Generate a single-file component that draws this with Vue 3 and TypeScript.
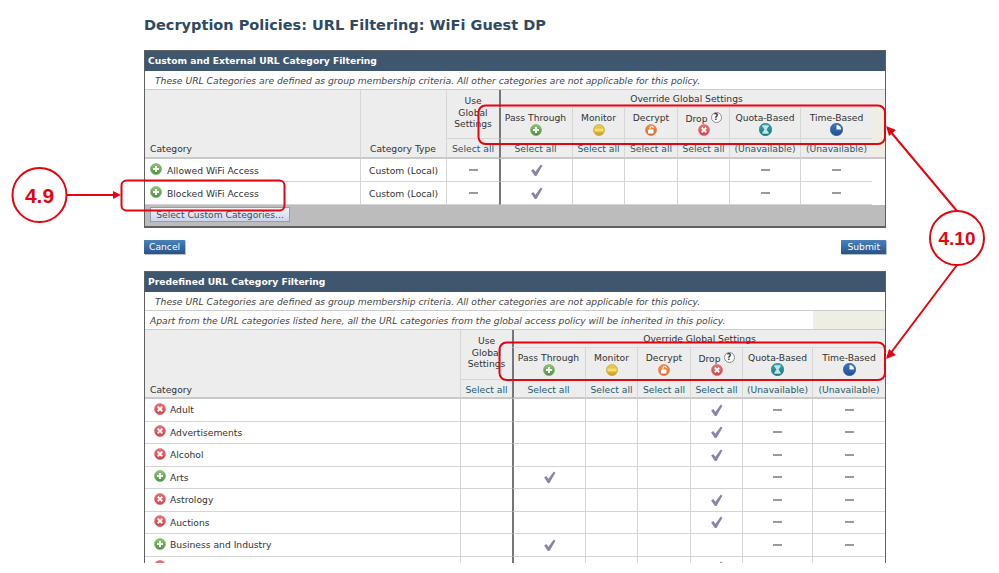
<script setup lang="ts">
type Mark = '' | 'dash' | 'check'
interface Row { icon: string; name: string; type?: string; cells: Mark[] }
interface Panel {
  id: string
  title: string
  notes: string[]
  hasType: boolean
  rows: Row[]
  footer: boolean
}

const actions = [
  { label: 'Pass Through', icon: 'allow', help: false, link: 'Select all' },
  { label: 'Monitor', icon: 'monitor', help: false, link: 'Select all' },
  { label: 'Decrypt', icon: 'decrypt', help: false, link: 'Select all' },
  { label: 'Drop', icon: 'drop', help: true, link: 'Select all' },
  { label: 'Quota-Based', icon: 'quota', help: false, link: '(Unavailable)' },
  { label: 'Time-Based', icon: 'time', help: false, link: '(Unavailable)' },
]

const note = 'These URL Categories are defined as group membership criteria. All other categories are not applicable for this policy.'
const passRow: Mark[] = ['', 'check', '', '', '', 'dash', 'dash']
const dropRow: Mark[] = ['', '', '', '', 'check', 'dash', 'dash']
const customRow: Mark[] = ['dash', 'check', '', '', '', 'dash', 'dash']

const panels: Panel[] = [
  {
    id: 'custom',
    title: 'Custom and External URL Category Filtering',
    notes: [note],
    hasType: true,
    footer: true,
    rows: [
      { icon: 'allow', name: 'Allowed WiFi Access', type: 'Custom (Local)', cells: customRow },
      { icon: 'allow', name: 'Blocked WiFi Access', type: 'Custom (Local)', cells: customRow },
    ],
  },
  {
    id: 'predefined',
    title: 'Predefined URL Category Filtering',
    notes: [note, 'Apart from the URL categories listed here, all the URL categories from the global access policy will be inherited in this policy.'],
    hasType: false,
    footer: false,
    rows: [
      { icon: 'drop', name: 'Adult', cells: dropRow },
      { icon: 'drop', name: 'Advertisements', cells: dropRow },
      { icon: 'drop', name: 'Alcohol', cells: dropRow },
      { icon: 'allow', name: 'Arts', cells: passRow },
      { icon: 'drop', name: 'Astrology', cells: dropRow },
      { icon: 'drop', name: 'Auctions', cells: dropRow },
      { icon: 'allow', name: 'Business and Industry', cells: passRow },
      { icon: 'drop', name: 'Chat and Instant Messaging', cells: dropRow },
    ],
  },
]
</script>

<template>
  <div class="page">
    <svg class="defs" width="0" height="0" aria-hidden="true">
      <defs>
        <linearGradient id="g-green" x1="0" y1="0" x2="0" y2="1"><stop offset="0" stop-color="#93c678" /><stop offset="1" stop-color="#4c9440" /></linearGradient>
        <linearGradient id="g-yellow" x1="0" y1="0" x2="0" y2="1"><stop offset="0" stop-color="#f0cf52" /><stop offset="1" stop-color="#d2a31f" /></linearGradient>
        <linearGradient id="g-orange" x1="0" y1="0" x2="0" y2="1"><stop offset="0" stop-color="#f4924e" /><stop offset="1" stop-color="#e2682a" /></linearGradient>
        <linearGradient id="g-red" x1="0" y1="0" x2="0" y2="1"><stop offset="0" stop-color="#ea7377" /><stop offset="1" stop-color="#d3444b" /></linearGradient>
        <linearGradient id="g-teal" x1="0" y1="0" x2="0" y2="1"><stop offset="0" stop-color="#39a8ac" /><stop offset="1" stop-color="#14777f" /></linearGradient>
        <linearGradient id="g-blue" x1="0" y1="0" x2="0" y2="1"><stop offset="0" stop-color="#3d78c0" /><stop offset="1" stop-color="#1f4f97" /></linearGradient>
      </defs>
      <symbol id="i-allow" viewBox="0 0 24 24">
        <circle cx="12" cy="12" r="11" fill="url(#g-green)" stroke="#5a9a48" />
        <path d="M12 6v12M6 12h12" stroke="#fff" stroke-width="4" />
      </symbol>
      <symbol id="i-monitor" viewBox="0 0 24 24">
        <circle cx="12" cy="12" r="11" fill="url(#g-yellow)" stroke="#a98e2a" />
        <rect x="3" y="9" width="18" height="6" fill="#f6df72" />
      </symbol>
      <symbol id="i-decrypt" viewBox="0 0 24 24">
        <circle cx="12" cy="12" r="11" fill="url(#g-orange)" stroke="#d9652a" />
        <rect x="6" y="11" width="11" height="8" rx="1" fill="#fff" />
        <path d="M10 11V8a3.4 3.4 0 0 1 6.8 0" fill="none" stroke="#fff" stroke-width="2" />
      </symbol>
      <symbol id="i-drop" viewBox="0 0 24 24">
        <circle cx="12" cy="12" r="11" fill="url(#g-red)" stroke="#cf5257" />
        <path d="M7.500 7.500l9 9M16.500 7.500l-9 9" stroke="#fff" stroke-width="3.600" />
      </symbol>
      <symbol id="i-quota" viewBox="0 0 24 24">
        <circle cx="12" cy="12" r="11.500" fill="url(#g-teal)" stroke="#176a72" />
        <path d="M6 4h12v2L14 12l4 6v2H6v-2l4-6-4-6z" fill="#bfe6e6" />
      </symbol>
      <symbol id="i-time" viewBox="0 0 24 24">
        <circle cx="12" cy="12" r="11.500" fill="url(#g-blue)" stroke="#1f4f97" />
        <path d="M12 12V3.500A8.500 8.500 0 0 1 20.500 12z" fill="#fff" />
      </symbol>
      <symbol id="i-check" viewBox="0 0 24 24">
        <path d="M2 13l4-3 4 5L20 2l3 2-11 19h-3z" fill="#8687a8" />
      </symbol>
    </svg>

    <h1 class="title">Decryption Policies: URL Filtering: WiFi Guest DP</h1>

    <template v-for="panel in panels" :key="panel.id">
      <section class="panel" :class="panel.id">
        <h2 class="bar">{{ panel.title }}</h2>
        <div v-for="(text, n) in panel.notes" :key="n" class="note" :class="'note' + n">
          <p>{{ text }}</p>
        </div>
        <div class="grid">
          <div class="h cat">Category</div>
          <div v-if="panel.hasType" class="h ctype">Category Type</div>
          <div class="h use">Use<br />Global<br />Settings</div>
          <div class="h over">Override Global Settings</div>
          <div v-if="panel.hasType" class="h tail-top"></div>

          <div v-for="(a, i) in actions" :key="a.label" class="h act" :class="{ first: i === 0 }">
            <span class="act-label">{{ a.label }}<span v-if="a.help" class="help">?</span></span>
            <svg class="ic" :class="a.icon"><use :href="'#i-' + a.icon" /></svg>
          </div>
          <div v-if="panel.hasType" class="h tail-mid"></div>

          <div class="h sel use-sel"><a>Select all</a></div>
          <div v-for="(a, i) in actions" :key="a.label + 's'" class="h sel" :class="{ first: i === 0, off: a.link !== 'Select all' }">
            <a v-if="a.link === 'Select all'">{{ a.link }}</a>
            <template v-else>(<a>Unavailable</a>)</template>
          </div>
          <div v-if="panel.hasType" class="h sel tail-sel"></div>

          <template v-for="row in panel.rows" :key="row.name">
            <div class="c name"><svg class="ic"><use :href="'#i-' + row.icon" /></svg>{{ row.name }}</div>
            <div v-if="panel.hasType" class="c tcell">{{ row.type }}</div>
            <div v-for="(m, i) in row.cells" :key="i" class="c mark" :class="{ first: i === 1 }">
              <svg v-if="m === 'check'" class="chk"><use href="#i-check" /></svg>
              <span v-else-if="m === 'dash'" class="dash"></span>
            </div>
            <div v-if="panel.hasType" class="tail-row"></div>
          </template>
        </div>
        <div v-if="panel.footer" class="foot"><button class="pick" type="button">Select Custom Categories...</button></div>
      </section>
      <div v-if="panel.footer" class="actions">
        <button class="blue" type="button">Cancel</button>
        <button class="blue" type="button">Submit</button>
      </div>
    </template>

    <svg class="marks" viewBox="0 0 999 573">
      <g fill="none" stroke="#e3050f" stroke-width="2">
        <rect x="121.500" y="180.500" width="163" height="30" rx="5" />
        <rect x="478.500" y="105.500" width="406.500" height="38.500" rx="7" />
        <rect x="499.500" y="342.500" width="385.500" height="37.500" rx="7" />
        <circle cx="39.500" cy="195" r="27" fill="#fff" />
        <circle cx="957" cy="238" r="27" fill="#fff" />
        <path d="M67 195H116M957 211L890 131M957 265L890 354" />
      </g>
      <g fill="#e3050f">
        <path d="M121 195l-8-4v8z" />
        <path d="M886 126l3 10 7-6z" />
        <path d="M886 359l3-10 7 6z" />
      </g>
      <text x="39.500" y="203" class="mark-text">4.9</text>
      <text x="957" y="245" class="mark-text small">4.10</text>
    </svg>
  </div>
</template>

<style scoped>
.page {
  position: relative;
  width: 999px;
  height: 573px;
  overflow: hidden;
  background: #fff;
  padding-left: 144px;
  box-sizing: border-box;
  font-family: "DejaVu Sans", Verdana, sans-serif;
  font-size: 9.200px;
  color: #333;
}
.defs { position: absolute; }
.title {
  margin: 0;
  height: 50px;
  box-sizing: border-box;
  padding-top: 15px;
  font-size: 14.500px;
  line-height: 20px;
  font-weight: 700;
  color: #2f4a63;
}
.panel {
  width: 742px;
  box-sizing: border-box;
  border: solid #5f6062;
  border-width: 1px 1px 2px 1px;
  background: #fff;
}
.panel.predefined {
  height: 292px;
  overflow: hidden;
  border-bottom: 0;
}
.bar {
  margin: 0;
  height: 20px;
  padding-left: 3px;
  font-size: 9.200px;
  line-height: 20px;
  font-weight: 700;
  color: #fff;
  background: #3f566f;
}
.note {
  height: 19px;
  box-sizing: border-box;
  border-bottom: 1px solid #ccc;
  background: #fff;
}
.note p {
  margin: 0;
  padding-left: 10px;
  line-height: 19px;
  font-style: italic;
  color: #444;
}
.note1 {
  background: #eeeee4;
}
.note1 p {
  width: 668px;
  box-sizing: border-box;
  padding-left: 5px;
  background: #fff;
  height: 18px;
}
.grid {
  display: grid;
  grid-auto-rows: 22.500px;
}
.custom .grid {
  grid-template-columns: 215px 86px 53px 73px 52px 53px 52px 71px 72px 1fr;
  grid-template-rows: 17px 32px 20px 23px 23px;
}
.predefined .grid {
  grid-template-columns: 315px 52px 73px 52px 53px 52px 70px 1fr;
  grid-template-rows: 17px 33px 19px;
}
.h {
  background: #ededed;
  box-sizing: border-box;
  text-align: center;
  border-left: 1px solid #d6d6d6;
}
.cat, .ctype {
  grid-row: 1 / 4;
  display: flex;
  align-items: flex-end;
  padding-bottom: 3px;
  border-bottom: 2px solid #c9c9c9;
  text-align: left;
}
.predefined .cat { padding-bottom: 2px; }
.cat { padding-left: 5px; border-left: 0; }
.ctype { padding-left: 9px; }
.use {
  grid-row: 1 / 3;
  padding-top: 5px;
  line-height: 11.500px;
  border-bottom: 1px solid #d6d6d6;
}
.over {
  grid-column: span 6;
  line-height: 18px;
  border-left: 2px solid #75767a;
}
.tail-top { background: #ededed; border: 0; }
.tail-mid, .tail-sel { background: #eeeee4; border: 0; }
.tail-sel { border-bottom: 2px solid #c9c9c9; }
.act {
  display: flex;
  flex-direction: column;
  align-items: center;
  padding-top: 4px;
  line-height: 11px;
  border-top: 1px solid #dcdcdc;
  border-bottom: 1px solid #d6d6d6;
}
.act.first, .sel.first { border-left: 2px solid #75767a; padding-right: 2px; }
.act-label { display: block; height: 12px; white-space: nowrap; }
.help {
  display: inline-block;
  width: 11px;
  height: 11px;
  margin-left: 3px;
  box-sizing: border-box;
  border: 1px solid #8a8a8a;
  border-radius: 50%;
  background: #fff;
  font-size: 8px;
  line-height: 9px;
  font-weight: 700;
  text-align: center;
  vertical-align: 2px;
}
.act .ic { width: 12px; height: 12px; margin-top: 0; }
.act .ic.quota, .act .ic.time { width: 13px; height: 13px; margin-top: -1px; }
.sel {
  line-height: 20px;
  white-space: nowrap;
  color: #33596a;
  border-bottom: 2px solid #c9c9c9;
}
.sel a { color: #1f5a6e; }
.c {
  box-sizing: border-box;
  border-bottom: 1px solid #d4d4d4;
  border-left: 1px solid #d4d4d4;
  background: #fff;
  display: flex;
  align-items: center;
}
.name {
  border-left: 0;
  padding-left: 5px;
  gap: 5px;
}
.predefined .name { gap: 4px; padding-left: 9px; }
.name .ic { width: 12px; height: 12px; flex: none; margin-top: -2px; }
.tcell { padding-left: 8px; }
.mark { justify-content: center; }
.mark.first { border-left: 2px solid #75767a; }
.chk { width: 13px; height: 14px; }
.dash { width: 9px; height: 2px; background: #9a9a9a; }
.tail-row { background: #fff; }
.foot {
  height: 21px;
  background: #bcbcbc;
  padding: 2px 0 0 5px;
  box-sizing: border-box;
}
.pick {
  display: block;
  width: 140px;
  height: 15px;
  padding: 0;
  margin: 0;
  border: 1px solid #8f9db5;
  background: linear-gradient(#f3f5fb, #ccd5ea);
  font: 9.200px "DejaVu Sans", Verdana, sans-serif;
  color: #41495c;
}
.actions {
  width: 742px;
  height: 43px;
  box-sizing: border-box;
  padding-top: 12px;
  display: flex;
  justify-content: space-between;
  align-items: flex-start;
}
.blue {
  height: 14px;
  padding: 0 5px;
  border: 0;
  background: linear-gradient(#4b82b8, #27548a);
  color: #fff;
  font: 9.200px/14px "DejaVu Sans", Verdana, sans-serif;
  box-shadow: 1px 1px 0 #b8c2cf;
}
.blue + .blue { padding: 0 6px; }
.marks {
  position: absolute;
  left: 0;
  top: 0;
  width: 999px;
  height: 573px;
  pointer-events: none;
}
.mark-text {
  font-family: "Liberation Sans", Arial, sans-serif;
  font-size: 21px;
  font-weight: 700;
  fill: #e3050f;
  text-anchor: middle;
}
.mark-text.small { font-size: 19px; }
</style>

<style>
html, body { margin: 0; background: #fff; }
</style>
